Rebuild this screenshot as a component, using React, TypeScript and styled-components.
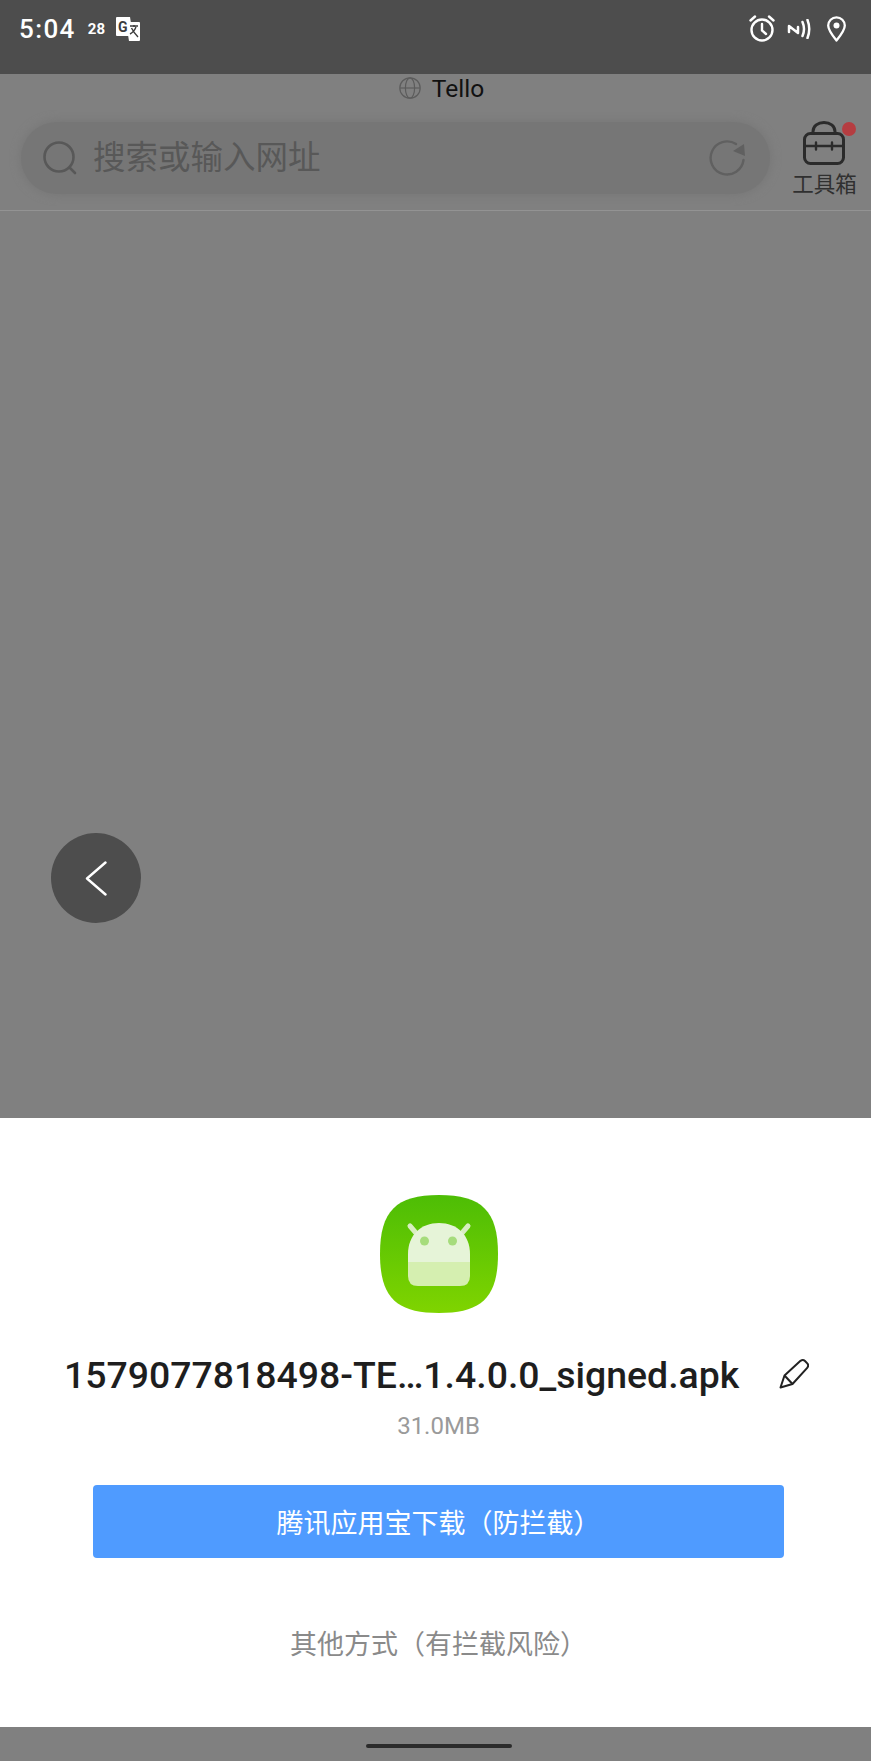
import React from 'react';
import styled, { createGlobalStyle } from 'styled-components';

const GlobalStyle = createGlobalStyle`
  html, body { margin: 0; padding: 0; background: #808080; }
  * { box-sizing: border-box; }
`;

const FONT = `Roboto, "Noto Sans CJK SC", sans-serif`;

const Screen = styled.div`
  position: relative;
  display: flex;
  flex-direction: column;
  width: 871px;
  height: 1761px;
  overflow: hidden;
  background: #808080;
  font-family: ${FONT};
`;

const StatusBar = styled.div`
  display: flex;
  align-items: flex-start;
  justify-content: space-between;
  height: 74px;
  flex: none;
  padding: 15px 25px 0 19px;
  background: #4d4d4d;
  color: #fff;
`;

const StatusGroup = styled.div`
  display: flex;
  align-items: center;
  height: 27px;
`;

const Clock = styled.span`
  font-size: 26px;
  font-weight: 500;
  letter-spacing: 1.4px;
`;

const Badge = styled.span`
  margin: 1px 10px 0 12px;
  font-size: 15px;
  font-weight: 700;
`;

const NfcSlot = styled.span`
  display: flex;
  margin: 0 16px 0 12px;
`;

const BrowserHeader = styled.div`
  display: flex;
  flex-direction: column;
  flex: none;
  height: 137px;
  border-bottom: 1px solid #939393;
`;

const SiteRow = styled.div`
  display: flex;
  align-items: center;
  justify-content: center;
  gap: 11px;
  height: 28px;
  padding: 0 0 0 12px;
  font-size: 24.5px;
  color: #111;
`;

const SearchRow = styled.div`
  display: flex;
  align-items: flex-start;
  justify-content: space-between;
  padding: 20px 14px 0 21px;
`;

const SearchBar = styled.div`
  display: flex;
  align-items: center;
  width: 749px;
  height: 72px;
  padding: 0 23px 0 22px;
  border-radius: 36px;
  background: #767676;
  box-shadow: 0 0 8px 2px #787878;
`;

const Placeholder = styled.span`
  flex: 1;
  margin-left: 16px;
  font-size: 32.5px;
  line-height: 72px;
  color: #585858;
`;

const ToolBox = styled.div`
  display: flex;
  flex-direction: column;
  align-items: center;
  width: 65px;
  margin-top: -1px;
`;

const ToolIconWrap = styled.div`
  position: relative;
  display: flex;
  margin-left: -1px;
`;

const RedDot = styled.span`
  position: absolute;
  top: 1px;
  right: -11px;
  width: 14px;
  height: 14px;
  border-radius: 50%;
  background: #b53d41;
`;

const ToolLabel = styled.span`
  margin-top: 6px;
  font-size: 21.5px;
  line-height: 28px;
  white-space: nowrap;
  color: #303030;
`;

const Blank = styled.div`
  flex: 1;
  position: relative;
`;

const BackFab = styled.div`
  position: absolute;
  left: 51px;
  top: 622px;
  display: flex;
  align-items: center;
  justify-content: center;
  width: 90px;
  height: 90px;
  border-radius: 50%;
  background: #4d4d4d;
`;

const Sheet = styled.div`
  display: flex;
  flex-direction: column;
  align-items: center;
  flex: none;
  height: 609px;
  padding-top: 77px;
  background: #fff;
`;

const AppIcon = styled.svg`
  display: block;
  margin-left: 7px;
`;

const TitleRow = styled.div`
  display: flex;
  align-items: center;
  align-self: stretch;
  height: 44px;
  margin-top: 40px;
  padding-left: 64px;
`;

const FileName = styled.span`
  width: 715px;
  font-size: 37.4px;
  font-weight: 500;
  white-space: nowrap;
  color: #1e1e1e;
`;

const EditSlot = styled.span`
  display: flex;
  flex: none;
  margin-top: -2px;
`;

const FileSize = styled.div`
  margin-top: 13px;
  margin-left: 6px;
  font-size: 24px;
  line-height: 32px;
  color: #9a9a9a;
`;

const PrimaryButton = styled.button`
  display: block;
  width: 691px;
  height: 73px;
  margin-top: 43px;
  margin-left: 6px;
  padding: 0;
  border: none;
  border-radius: 4px;
  background: #4f9bff;
  font-family: inherit;
  font-size: 27px;
  color: #fff;
`;

const SecondaryLink = styled.div`
  margin-top: 67px;
  margin-left: 6px;
  font-size: 27px;
  line-height: 40px;
  color: #8a8a8a;
`;

const NavBar = styled.div`
  display: flex;
  justify-content: center;
  flex: none;
  height: 34px;
  padding: 17px 0 0 6px;
  background: #808080;
`;

const HomeHandle = styled.div`
  width: 146px;
  height: 4px;
  border-radius: 2px;
  background: #2b2b2b;
`;

const TranslateIcon = () => (
  <svg width="26" height="26" viewBox="0 0 26 26">
    <path d="M1 2 Q1 1 2 1 H15 L18 20 H2 Q1 20 1 19 Z" fill="#fff" />
    <path d="M11 6 H24 Q25 6 25 7 V24 Q25 25 24 25 H14 Z" fill="#fff" />
    <text x="3" y="16" fontFamily="Roboto, sans-serif" fontSize="14" fontWeight="700" fill="#3c3c3c">G</text>
    <path d="M15 10 H23 M19 9 V11 M21 11 Q19 16 15 18 M16.5 12 Q19 17 23 21" fill="none" stroke="#3c3c3c" strokeWidth="1.4" />
  </svg>
);

const AlarmIcon = () => (
  <svg width="26" height="27" viewBox="0 0 26 27" fill="none" stroke="#fff" strokeWidth="2.4" strokeLinecap="round">
    <circle cx="13" cy="15" r="10.5" />
    <path d="M13 9 V15.5 L17 19 M1.5 5.5 L6 1.5 M24.5 5.5 L20 1.5" />
  </svg>
);

const NfcIcon = () => (
  <svg width="24" height="20" viewBox="0 0 24 20" fill="none" stroke="#fff" strokeWidth="2.5" strokeLinecap="round" strokeLinejoin="round">
    <path d="M2 13 V7 L11 14 V8" />
    <path d="M15.5 3 Q18.5 10 15.5 17 M20.5 1 Q24 10 20.5 19" />
  </svg>
);

const PinIcon = () => (
  <svg width="19" height="26" viewBox="0 0 19 26" fill="none">
    <path d="M9.5 24.5 C5 19 1.2 14.5 1.2 9.6 A8.3 8.3 0 0 1 17.8 9.6 C17.8 14.5 14 19 9.5 24.5 Z" stroke="#fff" strokeWidth="2.3" strokeLinejoin="round" />
    <circle cx="9.5" cy="9.5" r="3" fill="#fff" />
  </svg>
);

const GlobeIcon = () => (
  <svg width="22" height="22" viewBox="0 0 22 22" fill="none" stroke="#5c5c5c" strokeWidth="1.2">
    <circle cx="11" cy="11" r="10.2" />
    <ellipse cx="11" cy="11" rx="4.6" ry="10.2" />
    <path d="M1 11 H21" />
  </svg>
);

const SearchIcon = () => (
  <svg width="34" height="34" viewBox="0 0 34 34" fill="none" stroke="#585858" strokeWidth="2.6" strokeLinecap="round">
    <circle cx="16" cy="16" r="14.5" />
    <path d="M27 27 L32 32" />
  </svg>
);

const RefreshIcon = () => (
  <svg width="38" height="38" viewBox="0 0 38 38" fill="none">
    <path d="M34.5 21 A16.5 16.5 0 1 1 27 5" stroke="#606060" strokeWidth="2.4" strokeLinecap="round" />
    <path d="M36 17 L35 5 L24 12 Z" fill="#606060" />
  </svg>
);

const ToolboxIcon = () => (
  <svg width="42" height="44" viewBox="0 0 42 44" fill="none" stroke="#2b2b2b" strokeWidth="3" strokeLinecap="round">
    <rect x="1.5" y="12.5" width="39" height="30" rx="6" />
    <path d="M10 12 V10.5 C10 5 15 1.5 21 1.5 C27 1.5 32 5 32 10.5 V12" />
    <path d="M2 25 H40 M13 21.5 V28.5 M29 21.5 V28.5" strokeWidth="2.4" />
  </svg>
);

const ChevronIcon = () => (
  <svg width="22" height="35" viewBox="0 0 22 35" fill="none" stroke="#fff" strokeWidth="2.4" strokeLinecap="round" strokeLinejoin="round">
    <path d="M20.5 1.5 L2 17.5 L20.5 33.5" />
  </svg>
);

const AndroidApkIcon = () => (
  <AppIcon width="118" height="118" viewBox="0 0 118 118">
    <defs>
      <linearGradient id="apkBg" x1="0" y1="0" x2="0" y2="1">
        <stop offset="0" stopColor="#4dbd05" />
        <stop offset="1" stopColor="#7fd400" />
      </linearGradient>
    </defs>
    <path d="M59 0 C102 0 118 16 118 59 C118 102 102 118 59 118 C16 118 0 102 0 59 C0 16 16 0 59 0 Z" fill="url(#apkBg)" />
    <path d="M30 31 L36 38 M88 31 L82 38" stroke="#d8eec0" strokeWidth="5" strokeLinecap="round" />
    <path d="M28 67 V59 C28 40 41 28 59 28 C77 28 90 40 90 59 V67 Z" fill="#e6f4d8" />
    <path d="M28 67 H90 V81 Q90 91 80 91 H38 Q28 91 28 81 Z" fill="#d5efb0" />
    <circle cx="44.5" cy="46" r="4.5" fill="#a6dc7c" />
    <circle cx="72.5" cy="46" r="4.5" fill="#a6dc7c" />
  </AppIcon>
);

const PencilIcon = () => (
  <svg width="30" height="30" viewBox="0 0 30 30" fill="none" stroke="#222" strokeWidth="2" strokeLinejoin="round">
    <path d="M1.5 28.5 L5.5 16.5 L21.5 1.8 Q24 0.2 26 2 L28.5 4.6 Q30 6.8 28.2 8.8 L13.5 25 Z" />
    <path d="M5.5 16.5 L13.5 25" />
  </svg>
);

export default function App() {
  return (
    <Screen>
      <GlobalStyle />
      <StatusBar>
        <StatusGroup>
          <Clock>5:04</Clock>
          <Badge>28</Badge>
          <TranslateIcon />
        </StatusGroup>
        <StatusGroup>
          <AlarmIcon />
          <NfcSlot><NfcIcon /></NfcSlot>
          <PinIcon />
        </StatusGroup>
      </StatusBar>
      <BrowserHeader>
        <SiteRow>
          <GlobeIcon />
          <span>Tello</span>
        </SiteRow>
        <SearchRow>
          <SearchBar>
            <SearchIcon />
            <Placeholder>搜索或输入网址</Placeholder>
            <RefreshIcon />
          </SearchBar>
          <ToolBox>
            <ToolIconWrap>
              <ToolboxIcon />
              <RedDot />
            </ToolIconWrap>
            <ToolLabel>工具箱</ToolLabel>
          </ToolBox>
        </SearchRow>
      </BrowserHeader>
      <Blank>
        <BackFab><ChevronIcon /></BackFab>
      </Blank>
      <Sheet>
        <AndroidApkIcon />
        <TitleRow>
          <FileName>1579077818498-TE…1.4.0.0_signed.apk</FileName>
          <EditSlot><PencilIcon /></EditSlot>
        </TitleRow>
        <FileSize>31.0MB</FileSize>
        <PrimaryButton>腾讯应用宝下载（防拦截）</PrimaryButton>
        <SecondaryLink>其他方式（有拦截风险）</SecondaryLink>
      </Sheet>
      <NavBar>
        <HomeHandle />
      </NavBar>
    </Screen>
  );
}
